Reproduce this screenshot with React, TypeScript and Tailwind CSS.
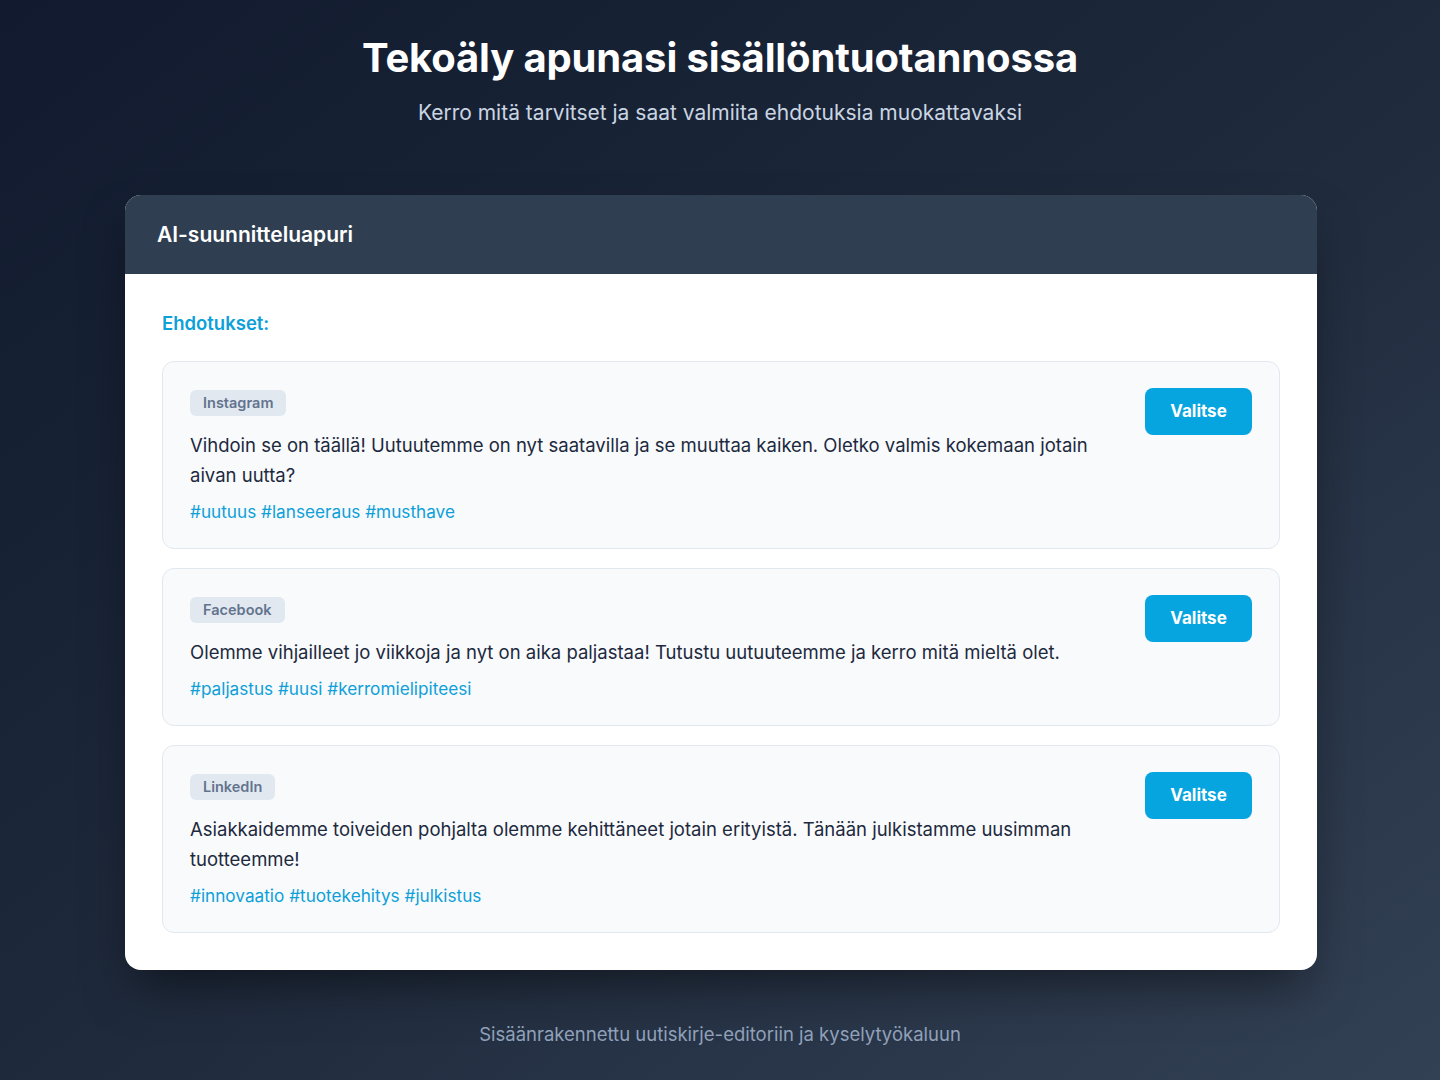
import React from "react";

const suggestions = [
  {
    platform: "Instagram",
    text: "Vihdoin se on täällä! Uutuutemme on nyt saatavilla ja se muuttaa kaiken. Oletko valmis kokemaan jotain aivan uutta?",
    tags: "#uutuus #lanseeraus #musthave",
  },
  {
    platform: "Facebook",
    text: "Olemme vihjailleet jo viikkoja ja nyt on aika paljastaa! Tutustu uutuuteemme ja kerro mitä mieltä olet.",
    tags: "#paljastus #uusi #kerromielipiteesi",
  },
  {
    platform: "LinkedIn",
    text: "Asiakkaidemme toiveiden pohjalta olemme kehittäneet jotain erityistä. Tänään julkistamme uusimman tuotteemme!",
    tags: "#innovaatio #tuotekehitys #julkistus",
  },
];

export default function App() {
  return (
    <div
      className="min-h-[1080px] w-full bg-gradient-to-br from-[#111a2e] via-[#1e293b] to-[#334155] flex flex-col items-center"
      style={{ fontFamily: "Inter, 'Noto Sans', sans-serif" }}
    >
      <h1 className="mt-[34px] text-[40px] leading-[48px] font-bold text-white tracking-[-0.15px]">
        Tekoäly apunasi sisällöntuotannossa
      </h1>
      <p className="mt-[17px] text-[21px] leading-[28px] text-slate-300">
        Kerro mitä tarvitset ja saat valmiita ehdotuksia muokattavaksi
      </p>

      <div className="mt-[68px] ml-[2px] w-[1192px] rounded-2xl bg-white overflow-hidden shadow-[0_25px_50px_-12px_rgba(0,0,0,0.5)]">
        <div className="h-[79px] bg-[#2f3e51] px-8 flex items-center">
          <h2 className="text-[21px] font-semibold text-white">AI-suunnitteluapuri</h2>
        </div>
        <div className="px-[37px] pt-[35px] pb-[37px]">
          <h3 className="text-[18.5px] leading-[28px] font-semibold text-[#0ea0d8] mb-[24px]">Ehdotukset:</h3>
          <div className="flex flex-col gap-[19px]">
            {suggestions.map((s) => (
              <div
                key={s.platform}
                className="rounded-xl border border-slate-200 bg-slate-50 pl-[27px] pr-[27px] pt-[28px] pb-[24px] flex items-start gap-12"
              >
                <div className="flex-1">
                  <span className="inline-block rounded-md bg-slate-200 px-[13px] py-[3px] text-[14.5px] leading-[20px] font-semibold text-slate-500">
                    {s.platform}
                  </span>
                  <p className="mt-[14px] text-[18.5px] leading-[30px] text-slate-800">{s.text}</p>
                  <p className="mt-[10px] text-[17.2px] leading-[24px] text-[#0ea0d8]">{s.tags}</p>
                </div>
                <button className="shrink-0 mt-[-2px] h-[47px] w-[107px] rounded-lg bg-[#07a5e0] text-white text-[17px] font-bold">
                  Valitse
                </button>
              </div>
            ))}
          </div>
        </div>
      </div>

      <p className="mt-[50px] text-[18.5px] leading-[28px] text-slate-400">
        Sisäänrakennettu uutiskirje-editoriin ja kyselytyökaluun
      </p>
    </div>
  );
}
